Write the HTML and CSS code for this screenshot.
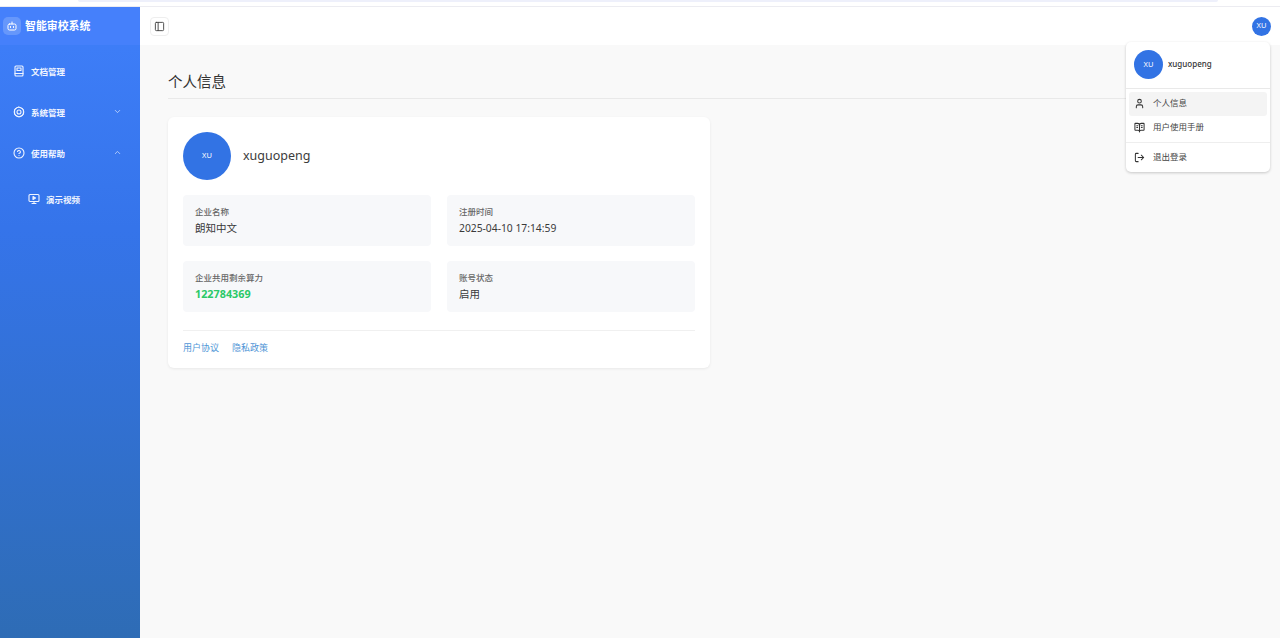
FILE: index.html
```html
<!DOCTYPE html>
<html lang="zh-CN">
<head>
<meta charset="utf-8">
<title>个人信息</title>
<link rel="stylesheet" href="styles.css">
</head>
<body>
<div class="tabstrip"><div class="tabstrip-bar"></div></div>
<div class="app">
  <aside class="sidebar">
    <div class="brand">
      <span class="brand-icon">
        <svg viewBox="0 0 24 24" width="12" height="12" fill="none" stroke="currentColor" stroke-width="2" stroke-linecap="round" stroke-linejoin="round"><path d="M12 8V4"/><rect x="4" y="8" width="16" height="12" rx="3"/><path d="M9 13v2M15 13v2"/></svg>
      </span>
      <span class="brand-name">智能审校系统</span>
    </div>
    <nav class="menu">
      <div class="menu-item">
        <svg class="menu-icon" viewBox="0 0 24 24" fill="none" stroke="currentColor" stroke-width="2.2" stroke-linecap="round" stroke-linejoin="round"><rect x="4" y="2" width="16" height="20" rx="2"/><rect x="8" y="6" width="8" height="5"/><path d="M4 17h16"/></svg>
        <span>文档管理</span>
      </div>
      <div class="menu-item">
        <svg class="menu-icon" viewBox="0 0 24 24" fill="none" stroke="currentColor" stroke-width="2.2" stroke-linecap="round" stroke-linejoin="round"><path d="M12 2l8.7 5v10L12 22l-8.7-5V7z" stroke-width="1.6"/><circle cx="12" cy="12" r="9.5"/><circle cx="12" cy="12" r="4"/></svg>
        <span>系统管理</span>
        <svg class="chev" viewBox="0 0 24 24" fill="none" stroke="currentColor" stroke-width="2" stroke-linecap="round" stroke-linejoin="round"><path d="m6 9 6 6 6-6"/></svg>
      </div>
      <div class="menu-item">
        <svg class="menu-icon" viewBox="0 0 24 24" fill="none" stroke="currentColor" stroke-width="2.2" stroke-linecap="round" stroke-linejoin="round"><circle cx="12" cy="12" r="10"/><path d="M9.1 9a3 3 0 0 1 5.8 1c0 2-3 3-3 3"/><path d="M12 17h.01"/></svg>
        <span>使用帮助</span>
        <svg class="chev" viewBox="0 0 24 24" fill="none" stroke="currentColor" stroke-width="2" stroke-linecap="round" stroke-linejoin="round"><path d="m18 15-6-6-6 6"/></svg>
      </div>
      <div class="menu-item sub">
        <svg class="menu-icon" viewBox="0 0 24 24" fill="none" stroke="currentColor" stroke-width="2.2" stroke-linecap="round" stroke-linejoin="round"><rect x="2" y="3" width="20" height="14" rx="2"/><path d="M12 17v4M8 21h8"/><path d="m10 7 5 3-5 3z" fill="currentColor"/></svg>
        <span>演示视频</span>
      </div>
    </nav>
  </aside>
  <div class="main">
    <header class="topbar">
      <button class="toggle" type="button">
        <svg viewBox="0 0 24 24" width="11" height="11" fill="none" stroke="currentColor" stroke-width="2" stroke-linecap="round" stroke-linejoin="round"><rect x="3" y="3" width="18" height="18" rx="2"/><path d="M9 3v18"/></svg>
      </button>
      <span class="avatar avatar-sm">XU</span>
    </header>
    <main class="content">
      <h1 class="page-title">个人信息</h1>
      <section class="card">
        <div class="profile">
          <span class="avatar avatar-lg">XU</span>
          <span class="profile-name">xuguopeng</span>
        </div>
        <div class="info-grid">
          <div class="info-box"><div class="info-label">企业名称</div><div class="info-value">朗知中文</div></div>
          <div class="info-box"><div class="info-label">注册时间</div><div class="info-value date">2025-04-10 17:14:59</div></div>
          <div class="info-box"><div class="info-label">企业共用剩余算力</div><div class="info-value green">122784369</div></div>
          <div class="info-box"><div class="info-label">账号状态</div><div class="info-value">启用</div></div>
        </div>
        <div class="links"><a>用户协议</a><a>隐私政策</a></div>
      </section>
    </main>
  </div>
</div>
<div class="dropdown">
  <div class="dd-head">
    <span class="avatar avatar-md">XU</span>
    <span class="dd-name">xuguopeng</span>
  </div>
  <div class="dd-group">
    <div class="dd-item active">
      <svg class="dd-icon" viewBox="0 0 24 24" fill="none" stroke="currentColor" stroke-width="2.2" stroke-linecap="round" stroke-linejoin="round"><path d="M19 21v-2a4 4 0 0 0-4-4H9a4 4 0 0 0-4 4v2"/><circle cx="12" cy="7" r="4"/></svg>
      <span>个人信息</span>
    </div>
    <div class="dd-item">
      <svg class="dd-icon" viewBox="0 0 24 24" fill="none" stroke="currentColor" stroke-width="2.2" stroke-linecap="round" stroke-linejoin="round"><path d="M12 7v14"/><path d="M3 18a1 1 0 0 1-1-1V4a1 1 0 0 1 1-1h5a4 4 0 0 1 4 4 4 4 0 0 1 4-4h5a1 1 0 0 1 1 1v13a1 1 0 0 1-1 1h-6a3 3 0 0 0-3 3 3 3 0 0 0-3-3z"/><path d="M6 8h2M6 12h2M16 8h2M16 12h2"/></svg>
      <span>用户使用手册</span>
    </div>
  </div>
  <div class="dd-group last">
    <div class="dd-item">
      <svg class="dd-icon" viewBox="0 0 24 24" fill="none" stroke="currentColor" stroke-width="2.2" stroke-linecap="round" stroke-linejoin="round"><path d="M9 21H5a2 2 0 0 1-2-2V5a2 2 0 0 1 2-2h4"/><path d="m16 17 5-5-5-5"/><path d="M21 12H9"/></svg>
      <span>退出登录</span>
    </div>
  </div>
</div>
</body>
</html>
```
FILE: styles.css
```css
* { box-sizing: border-box; }
html, body { height: 100%; }
body {
  margin: 0;
  overflow: hidden;
  background: #fff;
  color: #333;
  font-family: "Noto Sans", "Noto Sans CJK SC", "Open Sans", sans-serif;
  display: flex;
  flex-direction: column;
}
.tabstrip { height: 7px; background: #fff; border-bottom: 1px solid #ececf1; flex: none; }
.tabstrip-bar { width: 1140px; height: 2px; margin-left: 78px; background: #eef0fb; border-radius: 0 0 8px 8px; }
.app { flex: 1; display: flex; min-height: 0; }
.sidebar {
  width: 140px;
  flex: none;
  color: #fff;
  background: linear-gradient(180deg, #3f7ffa 0%, #3574ea 35%, #2e6cb5 100%);
}
.brand {
  height: 38px;
  display: flex;
  align-items: center;
  gap: 4px;
  padding-left: 3px;
  background: #4580fb;
}
.brand-icon {
  width: 18px; height: 18px;
  border-radius: 5px;
  background: rgba(255,255,255,.18);
  display: flex; align-items: center; justify-content: center;
}
.brand-name { font-size: 10.9px; font-weight: 700; line-height: 1; }
.menu { display: flex; flex-direction: column; padding-top: 5px; }
.menu-item {
  height: 41px;
  display: flex;
  align-items: center;
  gap: 6px;
  padding: 0 18px 0 13px;
  font-size: 8.5px;
  font-weight: 700;
  color: #f0f5ff;
}
.menu-item.sub { margin-top: 5px; padding-left: 28px; }
.menu-icon { width: 12px; height: 12px; flex: none; }
.chev { width: 9px; height: 9px; margin-left: auto; opacity: .85; }
.main { flex: 1; min-width: 0; display: flex; flex-direction: column; background: #f9f9f9; }
.topbar {
  height: 38px;
  flex: none;
  background: #fff;
  display: flex;
  align-items: center;
  justify-content: space-between;
  padding: 0 9px 0 10px;
}
.toggle {
  width: 19px; height: 19px;
  padding: 0;
  background: #fff;
  border: 1px solid #eee;
  border-radius: 4px;
  color: #444;
  display: flex; align-items: center; justify-content: center;
}
.avatar {
  border-radius: 50%;
  background: #3273e4;
  color: #fff;
  display: flex; align-items: center; justify-content: center;
  flex: none;
  line-height: 1;
}
.avatar-sm { width: 19px; height: 19px; font-size: 7.5px; }
.avatar-md { width: 29px; height: 29px; font-size: 7.5px; }
.avatar-lg { width: 48px; height: 48px; font-size: 7.5px; }
.content { padding: 26px 570px 0 28px; }
.page-title {
  margin: 0 -570px 18px 0;
  height: 28px;
  padding-bottom: 6px;
  width: 958px;
  border-bottom: 1px solid #e9e9e9;
  font-size: 14.5px;
  font-weight: 400;
  line-height: 21px;
  color: #333;
}
.card {
  width: 542px;
  background: #fff;
  border-radius: 6px;
  box-shadow: 0 1px 3px rgba(0,0,0,.07);
  padding: 15px 15px 14px;
}
.profile { display: flex; align-items: center; gap: 12px; margin-bottom: 15px; }
.profile-name { font-size: 12.5px; line-height: 18px; color: #3c3c3c; }
.info-grid { display: grid; grid-template-columns: 248px 248px; gap: 15px; justify-content: space-between; }
.info-box { height: 51px; background: #f7f8fa; border-radius: 4px; padding: 11px 12px 0; }
.info-label { font-size: 8.5px; line-height: 12px; font-weight: 500; color: #666; }
.info-value { font-size: 10.5px; line-height: 16px; margin-top: 2px; color: #3a3a3a; }
.info-value.date { font-size: 10.3px; }
.info-value.green { font-size: 10.8px; font-weight: 700; color: #2bc968; }
.links {
  margin-top: 18px;
  padding-top: 10px;
  border-top: 1px solid #f0f0f0;
  display: flex;
  gap: 13px;
  font-size: 9px;
  line-height: 13px;
  color: #4f95d6;
}
.dropdown {
  position: absolute;
  left: 1126px;
  top: 42px;
  width: 144px;
  background: #fff;
  border-radius: 5px;
  box-shadow: 0 1px 3px rgba(0,0,0,.2);
  color: #333;
}
.dd-head { height: 46px; padding: 8px 8px 0; display: flex; align-items: flex-start; gap: 5px; }
.dd-name { font-size: 8px; font-weight: 500; line-height: 27px; }
.dd-group { border-top: 1px solid #e9e9e9; padding: 3px 3px 2px; }
.dd-group.last { border-top: 1px solid #eee; padding: 3px 3px 2px; }
.dd-item { height: 24px; display: flex; align-items: center; gap: 8px; padding: 0 5px 2px; border-radius: 3px; font-size: 8.5px; line-height: 12px; color: #444; }
.dd-item.active { background: #f4f4f4; }
.dd-icon { width: 11px; height: 11px; flex: none; color: #333; }
```
